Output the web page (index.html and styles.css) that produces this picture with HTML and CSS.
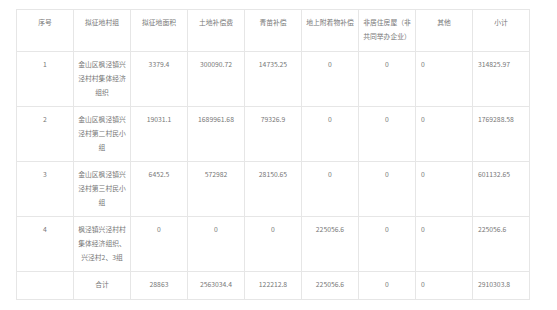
FILE: index.html
```html
<!DOCTYPE html>
<html lang="zh-CN">
<head>
  <meta charset="UTF-8">
  <title>征地补偿汇总表</title>
  <link rel="stylesheet" href="styles.css">
</head>
<body>

  <div class="wrap">
    <table class="sheet">
      <tr class="head">
        <td>序号</td>
        <td>拟征地村组</td>
        <td>拟征地面积</td>
        <td>土地补偿费</td>
        <td>青苗补偿</td>
        <td>地上附着物补偿</td>
        <td>非居住房屋（非共同举办企业）</td>
        <td>其他</td>
        <td>小计</td>
      </tr>
      <tr class="row">
        <td>1</td>
        <td>金山区枫泾镇兴泾村村集体经济组织</td>
        <td>3379.4</td>
        <td>300090.72</td>
        <td>14735.25</td>
        <td>0</td>
        <td>0</td>
        <td class="left">0</td>
        <td class="left">314825.97</td>
      </tr>
      <tr class="row">
        <td>2</td>
        <td>金山区枫泾镇兴泾村第二村民小组</td>
        <td>19031.1</td>
        <td>1689961.68</td>
        <td>79326.9</td>
        <td>0</td>
        <td>0</td>
        <td class="left">0</td>
        <td class="left">1769288.58</td>
      </tr>
      <tr class="row">
        <td>3</td>
        <td>金山区枫泾镇兴泾村第三村民小组</td>
        <td>6452.5</td>
        <td>572982</td>
        <td>28150.65</td>
        <td>0</td>
        <td>0</td>
        <td class="left">0</td>
        <td class="left">601132.65</td>
      </tr>
      <tr class="row">
        <td>4</td>
        <td>枫泾镇兴泾村村集体经济组织、兴泾村2、3组</td>
        <td>0</td>
        <td>0</td>
        <td>0</td>
        <td>225056.6</td>
        <td>0</td>
        <td class="left">0</td>
        <td class="left">225056.6</td>
      </tr>
      <tr class="total">
        <td></td>
        <td>合计</td>
        <td>28863</td>
        <td>2563034.4</td>
        <td>122212.8</td>
        <td>225056.6</td>
        <td>0</td>
        <td class="left">0</td>
        <td class="left">2910303.8</td>
      </tr>
    </table>
  </div>

</body>
</html>
```

FILE: styles.css
```css
body {
  margin: 0;
  background: #fff;
  font-family: "Noto Sans CJK SC", "Noto Sans", sans-serif;
  color: #777;
}
.wrap {
  padding: 9px 0 0 16px;
}
.sheet {
  width: 514px;
  table-layout: fixed;
  border-collapse: collapse;
  font-size: 6.8px;
  line-height: 14px;
}
.sheet td {
  border: 1px solid #e6e6e6;
  padding: 5px 3px 0;
  text-align: center;
  vertical-align: top;
}
.sheet td.left {
  text-align: left;
  padding-left: 5px;
}
.head {
  height: 42px;
}
.row {
  height: 55px;
}
.total {
  height: 28px;
}
```
